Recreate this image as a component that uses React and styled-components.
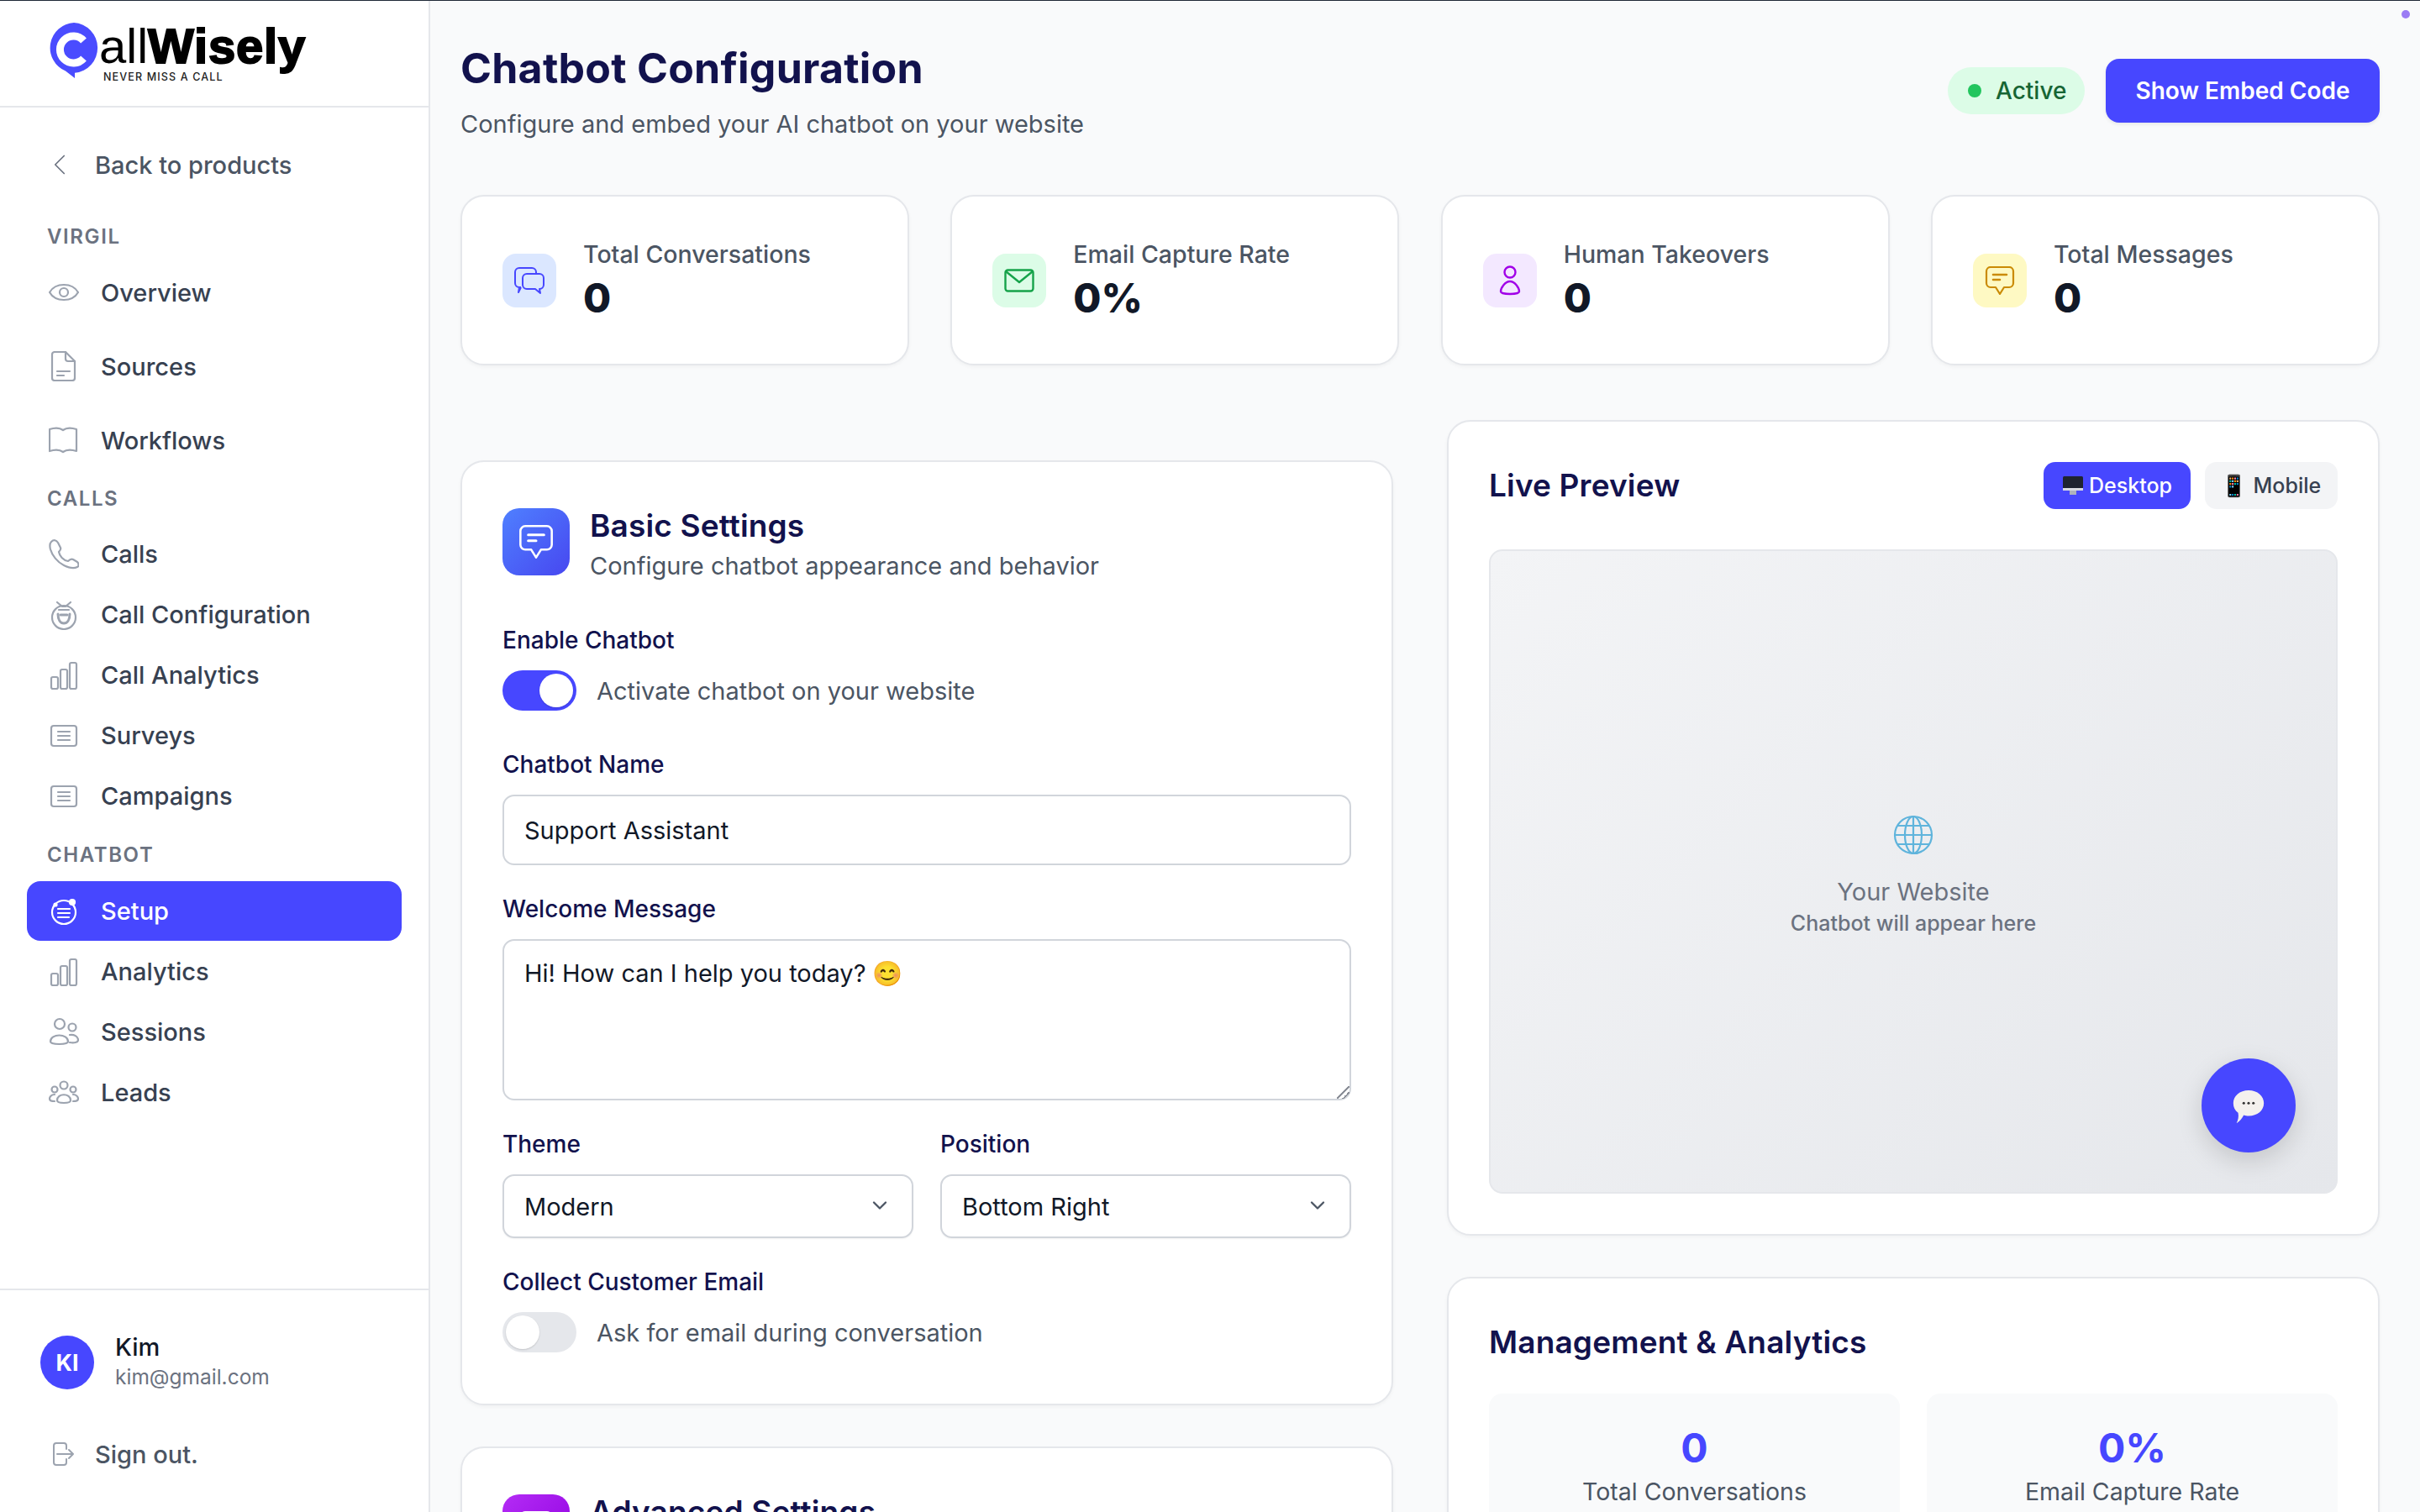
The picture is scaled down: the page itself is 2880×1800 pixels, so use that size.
import React from 'react';
import styled, { createGlobalStyle } from 'styled-components';
import { ChevronDown, ChevronLeft } from 'lucide-react';

const PRIMARY = '#4747ff';
const NAVY = '#12124d';

const GlobalStyle = createGlobalStyle`
  * { box-sizing: border-box; }
  html, body { margin: 0; padding: 0; height: 100%; overflow: hidden; background: #f9fafb; }
  body { font-family: Inter, "Noto Sans", sans-serif; color: #111827; }
`;

const Page = styled.div`
  position: relative;
  height: 1800px;
  display: flex;
  flex-direction: column;
  border-top: 1px solid #1f2937;
  overflow: hidden;
`;
const Shell = styled.div`
  flex: 1;
  display: flex;
  min-height: 0;
`;
const CornerDot = styled.span`
  position: absolute;
  top: 11px;
  right: 12px;
  width: 10px;
  height: 10px;
  border-radius: 50%;
  background: #9b7cf4;
`;

/* sidebar */
const Sidebar = styled.aside`
  width: 512px;
  flex-shrink: 0;
  display: flex;
  flex-direction: column;
  background: #fff;
  border-right: 2px solid #e5e7eb;
`;
const LogoBar = styled.div`
  height: 127px;
  flex-shrink: 0;
  padding: 26px 0 0 58px;
  display: flex;
  gap: 0;
  border-bottom: 2px solid #e5e7eb;
`;
const LogoText = styled.div`
  margin-top: -1px;
  display: flex;
  flex-direction: column;
`;
const LogoWord = styled.div`
  font-family: "Liberation Sans", Arial, sans-serif;
  font-size: 58px;
  line-height: 58px;
  color: #000;
  white-space: nowrap;
  b {
    font-weight: 700;
    -webkit-text-stroke: 2px #000;
    letter-spacing: 0.8px;
  }
`;
const LogoTag = styled.div`
  font-family: Inter, sans-serif;
  font-size: 12.5px;
  font-weight: 500;
  line-height: 14px;
  margin: 1px 0 0 5px;
  letter-spacing: 1.15px;
  color: #222;
`;
const Nav = styled.nav`
  flex: 1;
  padding: 33px 32px 0;
`;
const BackRow = styled.div`
  height: 70px;
  display: flex;
  align-items: center;
  gap: 21px;
  padding-left: 18px;
  font-size: 29px;
  font-weight: 500;
  color: #4b5563;
  svg { color: #6b7280; }
`;
const SectionLabel = styled.div`
  height: 46px;
  margin-top: ${p => p.$mt}px;
  margin-bottom: ${p => p.$mb}px;
  padding-left: 24px;
  display: flex;
  align-items: center;
  font-size: 24px;
  font-weight: 600;
  letter-spacing: 1.6px;
  color: #6b7280;
`;
const NavItem = styled.a`
  height: ${p => (p.$tall ? 88 : 71)}px;
  margin-bottom: ${p => (p.$tall ? 0 : 1)}px;
  padding-left: 26px;
  display: flex;
  align-items: center;
  gap: 26px;
  border-radius: 16px;
  font-size: 29px;
  font-weight: 500;
  color: ${p => (p.$active ? '#fff' : '#374151')};
  background: ${p => (p.$active ? PRIMARY : 'transparent')};
`;
const NavGlyph = styled.svg`
  width: 36px;
  height: 36px;
  flex-shrink: 0;
  fill: none;
  stroke: ${p => (p.$active ? '#fff' : '#9ca3af')};
  stroke-width: 2.2;
  stroke-linecap: round;
  stroke-linejoin: round;
`;
const SidebarFoot = styled.div`
  height: 266px;
  flex-shrink: 0;
  border-top: 2px solid #e5e7eb;
  padding: 50px 0 0 48px;
`;
const UserRow = styled.div`
  display: flex;
  align-items: center;
  gap: 25px;
`;
const Avatar = styled.div`
  width: 64px;
  height: 64px;
  margin-top: 2px;
  border-radius: 50%;
  background: ${PRIMARY};
  color: #fff;
  display: flex;
  align-items: center;
  justify-content: center;
  font-size: 27px;
  font-weight: 700;
`;
const UserName = styled.div`
  font-size: 29px;
  font-weight: 500;
  line-height: 36px;
  color: #111827;
`;
const UserMail = styled.div`
  font-size: 24.5px;
  line-height: 34px;
  color: #6b7280;
`;
const SignOut = styled.div`
  margin: 53px 0 0 14px;
  height: 44px;
  display: flex;
  align-items: center;
  gap: 25px;
  font-size: 29px;
  font-weight: 500;
  color: #4b5563;
`;

/* main */
const Main = styled.main`
  flex: 1;
  min-width: 0;
  padding: 50px 48px 0 36px;
`;
const Header = styled.header`
  display: flex;
  justify-content: space-between;
  align-items: flex-start;
  margin-bottom: 62px;
`;
const Title = styled.h1`
  margin: 0 0 15px;
  font-size: 50px;
  line-height: 60px;
  font-weight: 700;
  letter-spacing: 0.25px;
  color: ${NAVY};
`;
const Subtitle = styled.p`
  margin: 0;
  font-size: 29px;
  line-height: 44px;
  color: #4b5563;
`;
const Actions = styled.div`
  margin-top: 19px;
  display: flex;
  align-items: center;
  gap: 25px;
`;
const StatusPill = styled.div`
  height: 56px;
  width: 163px;
  padding-left: 24px;
  display: flex;
  align-items: center;
  gap: 17px;
  border-radius: 28px;
  background: #dcfce7;
  color: #166534;
  font-size: 28px;
  font-weight: 500;
  &::before {
    content: "";
    width: 16px;
    height: 16px;
    border-radius: 50%;
    background: #22c55e;
  }
`;
const EmbedButton = styled.button`
  width: 326px;
  height: 76px;
  border: 0;
  border-radius: 16px;
  background: ${PRIMARY};
  color: #fff;
  font: 600 28px Inter, sans-serif;
  box-shadow: 0 2px 4px rgba(0, 0, 0, 0.08);
`;
const StatGrid = styled.section`
  display: grid;
  grid-template-columns: repeat(4, 534px);
  justify-content: space-between;
  margin-bottom: 65px;
`;
const Card = styled.div`
  background: #fff;
  border: 2px solid #e5e7eb;
  border-radius: 28px;
  box-shadow: 0 2px 4px rgba(0, 0, 0, 0.04);
`;
const StatCard = styled(Card)`
  height: 203px;
  padding: 0 48px;
  display: flex;
  align-items: center;
  gap: 32px;
`;
const StatTile = styled.div`
  width: 64px;
  height: 64px;
  flex-shrink: 0;
  border-radius: 16px;
  display: flex;
  align-items: center;
  justify-content: center;
  background: ${p => p.$bg};
  color: ${p => p.$fg};
`;
const StatLabel = styled.div`
  font-size: 28.5px;
  line-height: 40px;
  font-weight: 500;
  color: #4b5563;
`;
const StatValue = styled.div`
  margin-top: 2px;
  font-size: 48px;
  line-height: 60px;
  font-weight: 800;
  color: #111827;
`;
const Columns = styled.div`
  display: grid;
  grid-template-columns: 1110px 1110px;
  column-gap: 64px;
  align-items: start;
`;
const LeftColumn = styled.div`
  margin-top: 48px;
  display: flex;
  flex-direction: column;
  gap: 49px;
`;
const RightColumn = styled.div`
  display: flex;
  flex-direction: column;
  gap: 49px;
`;
const FormCard = styled(Card)`
  padding: 55px 48px 61px;
`;
const FormHead = styled.div`
  display: flex;
  align-items: flex-start;
  gap: 24px;
`;
const FormBadge = styled.div`
  width: 80px;
  height: 80px;
  flex-shrink: 0;
  border-radius: 20px;
  display: flex;
  align-items: center;
  justify-content: center;
  color: #fff;
  background: linear-gradient(135deg, ${p => p.$from}, ${p => p.$to});
`;
const FormHeadText = styled.div`
  margin-top: -2px;
`;
const CardTitle = styled.h2`
  margin: 0;
  font-size: 37px;
  line-height: 46px;
  font-weight: 600;
  letter-spacing: 0.15px;
  color: ${NAVY};
`;
const CardSub = styled.p`
  margin: 5px 0 0;
  font-size: 29px;
  line-height: 40px;
  color: #4b5563;
`;
const Field = styled.div`
  margin-top: ${p => p.$mt || 34}px;
`;
const FieldLabel = styled.label`
  display: block;
  height: 36px;
  margin-bottom: 18px;
  font-size: 28px;
  line-height: 36px;
  font-weight: 500;
  color: ${NAVY};
`;
const TextInput = styled.input`
  display: block;
  width: 100%;
  height: 84px;
  padding: 0 24px;
  border: 2px solid #d1d5db;
  border-radius: 14px;
  background: #fff;
  color: #111827;
  font: 400 29px Inter, sans-serif;
  outline: none;
`;
const TextArea = styled.textarea`
  display: block;
  width: 100%;
  height: 192px;
  padding: 17px 24px;
  border: 2px solid #d1d5db;
  border-radius: 14px;
  background: #fff;
  color: #111827;
  font: 400 29px/44px Inter, "Noto Color Emoji", sans-serif;
  outline: none;
  resize: vertical;
  &::-webkit-resizer {
    background: linear-gradient(
      135deg,
      transparent 46%, #8b8f98 46%, #8b8f98 54%,
      transparent 54%, transparent 70%, #8b8f98 70%, #8b8f98 78%, transparent 78%
    );
  }
`;
const TwoFields = styled.div`
  display: grid;
  grid-template-columns: 1fr 1fr;
  column-gap: 32px;
`;
const SelectWrap = styled.div`
  position: relative;
  svg {
    position: absolute;
    top: 23px;
    right: 26px;
    color: #4b5563;
    pointer-events: none;
  }
`;
const SelectBox = styled.select`
  display: block;
  width: 100%;
  height: 76px;
  padding: 0 60px 0 24px;
  appearance: none;
  border: 2px solid #d1d5db;
  border-radius: 14px;
  background: #fff;
  color: #111827;
  font: 400 29px Inter, sans-serif;
  box-shadow: 0 1px 2px rgba(0, 0, 0, 0.05);
  outline: none;
`;
const ToggleRow = styled.div`
  display: flex;
  align-items: center;
  gap: 24px;
  font-size: 29px;
  color: #4b5563;
`;
const Toggle = styled.span`
  width: 88px;
  height: 48px;
  padding: 4px;
  border-radius: 24px;
  display: flex;
  justify-content: ${p => (p.$on ? 'flex-end' : 'flex-start')};
  background: ${p => (p.$on ? PRIMARY : '#e5e7eb')};
  &::after {
    content: "";
    width: 40px;
    height: 40px;
    border-radius: 50%;
    background: #fff;
    box-shadow: 0 1px 2px rgba(0, 0, 0, 0.15);
  }
`;

/* preview */
const PreviewCard = styled(Card)`
  padding: 48px;
`;
const PreviewHead = styled.div`
  display: flex;
  align-items: center;
  justify-content: space-between;
  margin-bottom: 48px;
`;
const DeviceTabs = styled.div`
  display: flex;
  gap: 17px;
`;
const DeviceTab = styled.button`
  height: 56px;
  width: ${p => p.$w}px;
  padding: 0;
  border: 0;
  border-radius: 14px;
  display: flex;
  align-items: center;
  justify-content: center;
  gap: 6px;
  background: ${p => (p.$active ? PRIMARY : '#f3f4f6')};
  color: ${p => (p.$active ? '#fff' : '#374151')};
  font: 500 25px Inter, "Noto Color Emoji", sans-serif;
`;
const PreviewStage = styled.div`
  position: relative;
  height: 767px;
  padding-top: 11px;
  border: 2px solid #e5e7eb;
  border-radius: 16px;
  background: linear-gradient(135deg, #f3f4f6, #e5e7eb);
  display: flex;
  flex-direction: column;
  align-items: center;
  justify-content: center;
  color: #6b7280;
`;
const StageTitle = styled.div`
  margin-top: 24px;
  font-size: 29px;
  line-height: 40px;
`;
const StageNote = styled.div`
  font-size: 25px;
  line-height: 34px;
  font-weight: 500;
`;
const ChatBubble = styled.div`
  position: absolute;
  right: 48px;
  bottom: 47px;
  width: 112px;
  height: 112px;
  padding-top: 6px;
  border-radius: 50%;
  background: ${PRIMARY};
  display: flex;
  align-items: center;
  justify-content: center;
  box-shadow: 0 10px 30px rgba(0, 0, 0, 0.15);
`;
const ManageCard = styled(Card)`
  padding: 53px 48px 60px;
`;
const ManageGrid = styled.div`
  margin-top: 38px;
  display: grid;
  grid-template-columns: 1fr 1fr;
  gap: 32px;
`;
const ManageStat = styled.div`
  padding: 35px 20px 40px;
  border-radius: 16px;
  background: #f9fafb;
  text-align: center;
`;
const ManageValue = styled.div`
  font-size: 48px;
  line-height: 60px;
  font-weight: 700;
  color: ${PRIMARY};
`;
const ManageLabel = styled.div`
  margin-top: 2px;
  font-size: 28.5px;
  line-height: 40px;
  color: #4b5563;
`;

/* drawings */
const Eye = () => <NavGlyph viewBox="0 0 36 36"><path d="M1 18C8 6 28 6 35 18 28 30 8 30 1 18Z" /><circle cx="18" cy="18" r="5" /></NavGlyph>;
const Doc = () => <NavGlyph viewBox="0 0 36 36"><path d="M7 1h13l11 11v20a3 3 0 0 1-3 3H7a3 3 0 0 1-3-3V4a3 3 0 0 1 3-3z" /><path d="M20 1v8a3 3 0 0 0 3 3h8M10 24h15M10 29h8" /></NavGlyph>;
const Book = () => <NavGlyph viewBox="0 0 36 36"><path d="M1 5c6-2 12-2 16 1 4-3 10-3 16-1v26c-6-2-12-2-16 1-4-3-10-3-16-1z" /></NavGlyph>;
const Phone = () => <NavGlyph viewBox="0 0 36 36"><path d="M3 3c3-3 6-2 8 1l3 6c1 2 0 3-2 5 1 5 5 10 11 11 2-2 4-3 6-2l5 3c2 2 2 5 0 6-4 2-10 1-16-2C10 27 4 19 2 12 1 8 1 5 3 3z" /></NavGlyph>;
const Robot = () => <NavGlyph viewBox="0 0 36 36"><circle cx="18" cy="21" r="14" /><path d="M10 3l6 5h4l6-5M12 12h12" /><path strokeWidth="3" d="M11 17c0 7 3 11 7 11s7-4 7-11" /><path strokeWidth="3" d="M14 18h8" /></NavGlyph>;
const Bars = () => <NavGlyph viewBox="0 0 36 36"><rect x="3" y="20" width="8" height="14" rx="2" /><rect x="14" y="11" width="8" height="23" rx="2" /><rect x="25" y="3" width="8" height="31" rx="2" /></NavGlyph>;
const ListBox = () => <NavGlyph viewBox="0 0 36 36"><rect x="3" y="6" width="30" height="24" rx="3" /><path d="M11 13h14M11 18h14M11 23h14" /></NavGlyph>;
const Users = () => <NavGlyph viewBox="0 0 36 36"><circle cx="13" cy="8" r="6" /><circle cx="28" cy="12" r="4.5" /><path d="M2 29c0-10 21-10 21 0 0 4-21 4-21 0z" /><path d="M25 21c5-1 10 2 10 6 0 3-5 4-10 3" /></NavGlyph>;
const Team = () => <NavGlyph viewBox="0 0 36 36"><circle cx="18" cy="9" r="4.5" /><circle cx="7" cy="14" r="3.5" /><circle cx="29" cy="14" r="3.5" /><path d="M10 27c0-9 16-9 16 0 0 4-16 4-16 0z" /><path d="M7 20c-4 0-6 3-6 5s3 3 6 3M29 20c4 0 6 3 6 5s-3 3-6 3" /></NavGlyph>;
const SetupGlyph = () => <NavGlyph $active viewBox="0 0 36 36"><circle cx="18" cy="19" r="14" /><path d="M11 15h14M11 20h14M11 25h13" /><circle cx="28" cy="7" r="3" fill="#fff" /><circle cx="8" cy="10" r="1.5" fill="#fff" /></NavGlyph>;
const LeaveGlyph = () => (
  <svg width="26" height="28" viewBox="0 0 26 28" fill="none" stroke="#9ca3af" strokeWidth="2" strokeLinecap="round" strokeLinejoin="round">
    <path d="M14 1H5a3 3 0 0 0-3 3v20a3 3 0 0 0 3 3h9a3 3 0 0 0 3-3v-4M17 8V4a3 3 0 0 0-3-3M6 14h19M20 9l5 5-5 5" />
  </svg>
);
const LogoMark = () => (
  <svg width="60" height="67" viewBox="0 0 60 67">
    <path fill="#4a4cff" d="M30 0a30 30 0 0 1 1 59.8V66L20 57.6A30 30 0 0 1 30 0z" />
    <path fill="none" stroke="#fff" strokeWidth="9" d="M41.5 21.5a16 16 0 1 0 0 21" />
  </svg>
);
const ChatsIcon = () => (
  <svg width="36" height="32" viewBox="0 0 36 32" fill="none" stroke="currentColor" strokeWidth="2" strokeLinejoin="round">
    <path d="M6 1h15a5 5 0 0 1 5 5v2M8 24H6a5 5 0 0 1-5-5V6a5 5 0 0 1 5-5M8 24l-3 6 1-6" />
    <path d="M15 8h15a5 5 0 0 1 5 5v8a5 5 0 0 1-5 5l1 5-6-5h-10a5 5 0 0 1-5-5v-8a5 5 0 0 1 5-5z" />
  </svg>
);
const MailIcon = () => (
  <svg width="36" height="28" viewBox="0 0 36 28" fill="none" stroke="currentColor" strokeWidth="2.4" strokeLinejoin="round">
    <rect x="1.5" y="1.5" width="33" height="25" rx="3" /><path d="M2 3l16 13L34 3" />
  </svg>
);
const PersonIcon = () => (
  <svg width="28" height="36" viewBox="0 0 28 36" fill="none" stroke="currentColor" strokeWidth="2.4" strokeLinejoin="round">
    <circle cx="14" cy="8" r="6.5" /><path d="M14 19c-6 0-11 8-11 12 0 4 22 4 22 0 0-4-5-12-11-12z" />
  </svg>
);
const NoteBubble = ({ w = 36, h = 34 }) => (
  <svg width={w} height={h} viewBox="0 0 36 34" fill="none" stroke="currentColor" strokeWidth="2.2" strokeLinejoin="round">
    <path d="M7 1h22a5 5 0 0 1 5 5v14a5 5 0 0 1-5 5h-6l-5 8-5-8H7a5 5 0 0 1-5-5V6a5 5 0 0 1 5-5z" />
    <path strokeLinecap="round" d="M10 10h16M10 16h8" strokeWidth="2.6" />
  </svg>
);
const Monitor = () => (
  <svg width="26" height="26" viewBox="0 0 26 26">
    <rect x="1" y="2" width="24" height="16" rx="1.5" fill="#1f2430" />
    <rect x="1" y="16" width="24" height="3" fill="#d9dbe2" />
    <rect x="9" y="19" width="8" height="5" fill="#aeb2bc" />
  </svg>
);
const Globe = () => (
  <svg width="48" height="48" viewBox="0 0 48 48" fill="none" stroke="#5fb4dc" strokeWidth="2.2">
    <circle cx="24" cy="24" r="22" />
    <ellipse cx="24" cy="24" rx="10" ry="22" />
    <path d="M24 2v44M2 24h44M5 13h38M5 35h38" />
  </svg>
);
const SpeechWhite = () => (
  <svg width="40" height="44" viewBox="0 0 40 46">
    <path fill="#f4f1ee" d="M20 1c11 0 19 7 19 16S31 33 20 33c-2 0-4 0-6-1-2 4-5 8-9 10 2-4 3-8 2-13C3 26 1 22 1 17 1 8 9 1 20 1z" />
    <circle cx="14" cy="17" r="1.6" fill="#333" /><circle cx="20" cy="17" r="1.6" fill="#333" /><circle cx="26" cy="17" r="1.6" fill="#333" />
  </svg>
);

const stats = [
  { label: 'Total Conversations', value: '0', bg: '#dbe7ff', fg: PRIMARY, icon: <ChatsIcon /> },
  { label: 'Email Capture Rate', value: '0%', bg: '#dcfce7', fg: '#16a34a', icon: <MailIcon /> },
  { label: 'Human Takeovers', value: '0', bg: '#f3e8ff', fg: '#a100e8', icon: <PersonIcon /> },
  { label: 'Total Messages', value: '0', bg: '#fef9c3', fg: '#ca8a04', icon: <NoteBubble /> },
];

export default function App() {
  return (
    <Page>
      <GlobalStyle />
      <CornerDot />
      <Shell>
        <Sidebar>
          <LogoBar>
            <LogoMark />
            <LogoText>
              <LogoWord>all<b>Wisely</b></LogoWord>
              <LogoTag>NEVER MISS A CALL</LogoTag>
            </LogoText>
          </LogoBar>
          <Nav>
            <BackRow><ChevronLeft size={42} strokeWidth={1} />Back to products</BackRow>
            <SectionLabel $mt={27} $mb={0}>VIRGIL</SectionLabel>
            <NavItem $tall><Eye />Overview</NavItem>
            <NavItem $tall><Doc />Sources</NavItem>
            <NavItem $tall><Book />Workflows</NavItem>
            <SectionLabel $mt={2} $mb={8}>CALLS</SectionLabel>
            <NavItem><Phone />Calls</NavItem>
            <NavItem><Robot />Call Configuration</NavItem>
            <NavItem><Bars />Call Analytics</NavItem>
            <NavItem><ListBox />Surveys</NavItem>
            <NavItem><ListBox />Campaigns</NavItem>
            <SectionLabel $mt={11} $mb={9}>CHATBOT</SectionLabel>
            <NavItem $active><SetupGlyph />Setup</NavItem>
            <NavItem><Bars />Analytics</NavItem>
            <NavItem><Users />Sessions</NavItem>
            <NavItem><Team />Leads</NavItem>
          </Nav>
          <SidebarFoot>
            <UserRow>
              <Avatar>KI</Avatar>
              <div>
                <UserName>Kim</UserName>
                <UserMail>kim@gmail.com</UserMail>
              </div>
            </UserRow>
            <SignOut><LeaveGlyph />Sign out.</SignOut>
          </SidebarFoot>
        </Sidebar>

        <Main>
          <Header>
            <div>
              <Title>Chatbot Configuration</Title>
              <Subtitle>Configure and embed your AI chatbot on your website</Subtitle>
            </div>
            <Actions>
              <StatusPill>Active</StatusPill>
              <EmbedButton>Show Embed Code</EmbedButton>
            </Actions>
          </Header>

          <StatGrid>
            {stats.map(s => (
              <StatCard key={s.label}>
                <StatTile $bg={s.bg} $fg={s.fg}>{s.icon}</StatTile>
                <div>
                  <StatLabel>{s.label}</StatLabel>
                  <StatValue>{s.value}</StatValue>
                </div>
              </StatCard>
            ))}
          </StatGrid>

          <Columns>
            <LeftColumn>
              <FormCard>
                <FormHead>
                  <FormBadge $from="#4f80ff" $to="#4747f0"><NoteBubble w={42} h={40} /></FormBadge>
                  <FormHeadText>
                    <CardTitle>Basic Settings</CardTitle>
                    <CardSub>Configure chatbot appearance and behavior</CardSub>
                  </FormHeadText>
                </FormHead>
                <Field $mt={50}>
                  <FieldLabel>Enable Chatbot</FieldLabel>
                  <ToggleRow><Toggle $on />Activate chatbot on your website</ToggleRow>
                </Field>
                <Field $mt={46}>
                  <FieldLabel>Chatbot Name</FieldLabel>
                  <TextInput readOnly value="Support Assistant" />
                </Field>
                <Field $mt={34}>
                  <FieldLabel>Welcome Message</FieldLabel>
                  <TextArea readOnly value="Hi! How can I help you today? 😊" />
                </Field>
                <TwoFields>
                  <Field>
                    <FieldLabel>Theme</FieldLabel>
                    <SelectWrap>
                      <SelectBox defaultValue="Modern"><option>Modern</option></SelectBox>
                      <ChevronDown size={28} strokeWidth={2} />
                    </SelectWrap>
                  </Field>
                  <Field>
                    <FieldLabel>Position</FieldLabel>
                    <SelectWrap>
                      <SelectBox defaultValue="Bottom Right"><option>Bottom Right</option></SelectBox>
                      <ChevronDown size={28} strokeWidth={2} />
                    </SelectWrap>
                  </Field>
                </TwoFields>
                <Field>
                  <FieldLabel>Collect Customer Email</FieldLabel>
                  <ToggleRow><Toggle />Ask for email during conversation</ToggleRow>
                </Field>
              </FormCard>
              <FormCard>
                <FormHead>
                  <FormBadge $from="#b42cf5" $to="#8f00e0"><NoteBubble w={42} h={40} /></FormBadge>
                  <FormHeadText>
                    <CardTitle>Advanced Settings</CardTitle>
                  </FormHeadText>
                </FormHead>
              </FormCard>
            </LeftColumn>

            <RightColumn>
              <PreviewCard>
                <PreviewHead>
                  <CardTitle>Live Preview</CardTitle>
                  <DeviceTabs>
                    <DeviceTab $active $w={175}><Monitor />Desktop</DeviceTab>
                    <DeviceTab $w={158}>📱 Mobile</DeviceTab>
                  </DeviceTabs>
                </PreviewHead>
                <PreviewStage>
                  <Globe />
                  <StageTitle>Your Website</StageTitle>
                  <StageNote>Chatbot will appear here</StageNote>
                  <ChatBubble><SpeechWhite /></ChatBubble>
                </PreviewStage>
              </PreviewCard>
              <ManageCard>
                <CardTitle>Management &amp; Analytics</CardTitle>
                <ManageGrid>
                  <ManageStat><ManageValue>0</ManageValue><ManageLabel>Total Conversations</ManageLabel></ManageStat>
                  <ManageStat><ManageValue>0%</ManageValue><ManageLabel>Email Capture Rate</ManageLabel></ManageStat>
                </ManageGrid>
              </ManageCard>
            </RightColumn>
          </Columns>
        </Main>
      </Shell>
    </Page>
  );
}
